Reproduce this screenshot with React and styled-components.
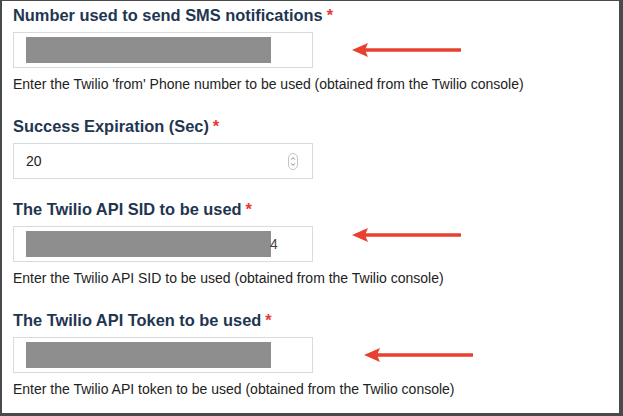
import React from 'react'
import styled, { createGlobalStyle } from 'styled-components'

const GlobalStyle = createGlobalStyle`
  html, body {
    margin: 0;
    padding: 0;
    background: #ffffff;
  }
  body {
    font-family: "Liberation Sans", Arial, Helvetica, sans-serif;
  }
`

const Frame = styled.div`
  box-sizing: border-box;
  width: 623px;
  height: 416px;
  background: #fff;
  border-style: solid;
  border-color: #4a4a4a;
  border-width: 1px 4px 3px 2px;
  padding: 4px 0 0 11px;
  overflow: hidden;
`

const Field = styled.div`
  margin-bottom: 20px;
`

const Label = styled.div`
  font-size: 16.4px;
  line-height: 20px;
  font-weight: bold;
  color: #1f3652;
  margin-bottom: 7px;
  white-space: nowrap;
`

const Required = styled.span`
  color: #e53935;
  margin-left: 4px;
`

const Row = styled.div`
  display: flex;
  align-items: center;
`

const InputBox = styled.div`
  box-sizing: border-box;
  width: 300px;
  height: 36px;
  border: 1px solid #d3dcdf;
  background: #fff;
  display: flex;
  align-items: center;
  padding: 0 14px 0 12px;
  font-size: 14px;
  color: #222;
`

const Redacted = styled.span`
  display: block;
  width: 245px;
  height: 26px;
  background: #8e8e8e;
  flex-shrink: 0;
`

const Tail = styled.span`
  margin-left: -1px;
  color: #444;
  font-size: 14px;
`

const Value = styled.span`
  flex: 1;
`

const Help = styled.div`
  font-size: 14px;
  line-height: 18px;
  color: #222;
  margin-top: 7px;
  padding-bottom: 3px;
  white-space: nowrap;
`

const ArrowWrap = styled.div`
  margin-left: ${p => p.$left}px;
  transform: translateY(${p => p.$shift || 0}px);
  display: flex;
`

const Arrow = ({ left, shift }) => (
  <ArrowWrap $left={left} $shift={shift}>
    <svg width="110" height="16" viewBox="0 0 110 16">
      <line x1="12" y1="8" x2="109" y2="8" stroke="#e8402f" strokeWidth="3.4" />
      <polygon points="0,8 16,1 13,8 16,15" fill="#e8402f" />
    </svg>
  </ArrowWrap>
)

const Spinner = () => (
  <svg width="10" height="17" viewBox="0 0 10 17">
    <rect x="0.5" y="0.5" width="9" height="16" rx="4.5" fill="#fff" stroke="#c4c4c4" />
    <path d="M3.2 6.6 L5 4.6 L6.8 6.6" fill="none" stroke="#777" strokeWidth="0.9" />
    <path d="M3.2 10.4 L5 12.4 L6.8 10.4" fill="none" stroke="#777" strokeWidth="0.9" />
  </svg>
)

const App = () => {
  return (
    <>
      <GlobalStyle />
      <Frame>
        <Field>
          <Label>
            Number used to send SMS notifications<Required>*</Required>
          </Label>
          <Row>
            <InputBox>
              <Redacted />
            </InputBox>
            <Arrow left={39} />
          </Row>
          <Help>Enter the Twilio 'from' Phone number to be used (obtained from the Twilio console)</Help>
        </Field>

        <Field>
          <Label>
            Success Expiration (Sec)<Required>*</Required>
          </Label>
          <Row>
            <InputBox>
              <Value>20</Value>
              <Spinner />
            </InputBox>
          </Row>
        </Field>

        <Field>
          <Label>
            The Twilio API SID to be used<Required>*</Required>
          </Label>
          <Row>
            <InputBox>
              <Redacted />
              <Tail>4</Tail>
            </InputBox>
            <Arrow left={39} shift={-9} />
          </Row>
          <Help>Enter the Twilio API SID to be used (obtained from the Twilio console)</Help>
        </Field>

        <Field>
          <Label>
            The Twilio API Token to be used<Required>*</Required>
          </Label>
          <Row>
            <InputBox>
              <Redacted />
            </InputBox>
            <Arrow left={51} />
          </Row>
          <Help>Enter the Twilio API token to be used (obtained from the Twilio console)</Help>
        </Field>
      </Frame>
    </>
  )
}

export default App
